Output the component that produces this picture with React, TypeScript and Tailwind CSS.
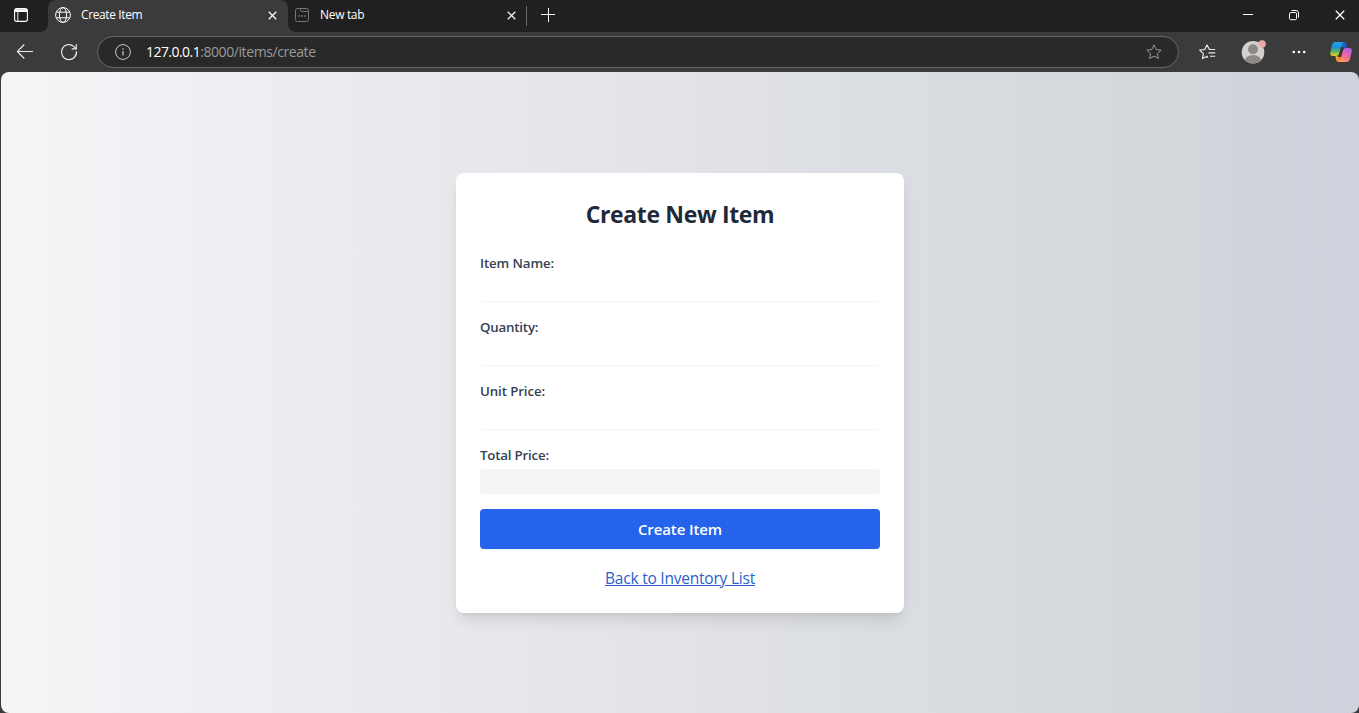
import React from "react";

const FIELDS = [
  { id: "name", label: "Item Name:", tracking: "tracking-[-0.12px]" },
  { id: "quantity", label: "Quantity:", tracking: "tracking-[-0.2px]" },
  { id: "unit", label: "Unit Price:", tracking: "tracking-[-0.12px]" },
];

function CloseIcon({ className = "size-[10px]" }: { className?: string }) {
  return (
    <svg viewBox="0 0 10 10" className={className} fill="none" stroke="#fff" strokeWidth="1.3">
      <path d="M.8.8l8.4 8.4M9.2.8L.8 9.2" />
    </svg>
  );
}

function TabBar() {
  return (
    <div className="flex h-8 bg-[#3b3b3b] text-[12px] text-white">
      <div className="flex w-12 items-center rounded-br-lg bg-[#202020] pb-[2px] pl-[14px]">
        <svg viewBox="0 0 14 14" className="size-[14px]" fill="none" stroke="#fff" strokeWidth="1.1">
          <rect x=".6" y=".6" width="12.8" height="12.8" rx="2.2" />
          <path d="M1 1.2h12v2.8H1z" fill="#fff" stroke="none" />
          <path d="M3.8 4v9.4" strokeWidth=".9" />
        </svg>
      </div>
      <div className="flex w-60 items-center bg-[#202020]">
        <div className="flex h-full w-full items-center rounded-t-lg bg-[#3b3b3b] pr-[11px] pb-[2px] pl-[7px]">
          <svg viewBox="0 0 16 16" className="mr-[10px] size-4" fill="none" stroke="#fff" strokeWidth="1">
            <circle cx="8" cy="8" r="7.4" />
            <ellipse cx="8" cy="8" rx="3.6" ry="7.4" />
            <path d="M1.4 5.2h13.2M1.4 10.8h13.2" />
          </svg>
          <span className="grow tracking-[-0.38px]">Create Item</span>
          <CloseIcon className="mt-px size-[9px]" />
        </div>
      </div>
      <div className="flex grow items-center rounded-bl-lg bg-[#202020] pb-[2px] pl-[7px]">
        <svg viewBox="0 0 14 14" className="mr-[11px] size-[14px]" fill="none" stroke="#777" strokeWidth="1">
          <rect x=".5" y=".5" width="13" height="13" rx="2" />
          <path d="M5.5.8v1.4q0 1.3 1.3 1.3h6.5" />
          <path d="M3.2 8h1.6M6.2 8h1.6M9.2 8h1.6" strokeWidth="1.5" />
        </svg>
        <span className="w-[187px] tracking-[-0.32px]">New tab</span>
        <CloseIcon className="mt-px size-[9px]" />
        <div className="mt-[1px] ml-[10px] h-5 w-px bg-[#6b6b6b]" />
        <svg viewBox="0 0 14 14" className="ml-[14px] size-[14px]" stroke="#fff" strokeWidth="1">
          <path d="M7.5 0v14M0 6.5h14" />
        </svg>
        <div className="grow" />
        <svg viewBox="0 0 10 10" className="mr-9 size-[10px]" stroke="#fff" strokeWidth="1">
          <path d="M0 4.5h10" />
        </svg>
        <svg viewBox="0 0 10 10" className="mr-9 size-[10px] overflow-visible" fill="none" stroke="#fff" strokeWidth="1">
          <rect x=".5" y="2.5" width="7" height="7.2" rx="1.2" />
          <path d="M2.5.5h4.6q2.4 0 2.4 2.4v4.8" />
        </svg>
        <CloseIcon className="mr-[14px] size-[10px]" />
      </div>
    </div>
  );
}

const STAR = "M8 .9l2.15 4.6 5 .65-3.7 3.45.95 5L8 12.2l-4.4 2.4.95-5L.85 6.15l5-.65z";

function CopilotLogo() {
  return (
    <svg viewBox="0 0 22 20" className="h-5 w-[22px] shrink-0">
      <defs>
        <linearGradient id="cp-left" x1="0" y1="0" x2="0" y2="1">
          <stop offset="0" stopColor="#16a5ee" />
          <stop offset=".4" stopColor="#2591d0" />
          <stop offset=".7" stopColor="#65b85b" />
          <stop offset="1" stopColor="#f2cc1f" />
        </linearGradient>
        <linearGradient id="cp-right" x1=".8" y1="0" x2=".2" y2="1">
          <stop offset="0" stopColor="#aa61ed" />
          <stop offset=".5" stopColor="#f264a3" />
          <stop offset="1" stopColor="#ffa04e" />
        </linearGradient>
        <linearGradient id="cp-top">
          <stop offset="0" stopColor="#1d91e7" />
          <stop offset="1" stopColor="#214bcb" />
        </linearGradient>
        <linearGradient id="cp-bottom">
          <stop offset="0" stopColor="#f6ac32" />
          <stop offset="1" stopColor="#f35a38" />
        </linearGradient>
      </defs>
      <path d="M9 0h5q2 0 2.5 2l.9 4h-2q-1.2-1.4-3.4-1H8z" fill="url(#cp-top)" />
      <path d="M13 20H8.4q-1.7 0-2.2-2L5.4 14H7q1.2 1.4 3.4 1H14z" fill="url(#cp-bottom)" />
      <path d="M5.5 0h8.3q-1.5.2-2 2l-2.6 9.6Q8.5 14 6.4 14H2.8Q-.4 14 .3 10.4L2 3Q2.8 0 5.5 0z" fill="url(#cp-left)" />
      <path d="M16.5 20H8.4q1.5-.2 2-2L13 8.4Q13.7 6 15.8 6h3.4q3.2 0 2.5 3.6L20 17q-.8 3-3.5 3z" fill="url(#cp-right)" />
      <path d="M12 5.5h1.8q-1 1-1.3 2.2L11 13.2q-.4 1.3-1.3 1.3H8.2q1-1 1.4-2.3L11 6.8q.3-1.3 1-1.3z" fill="#37353a" />
    </svg>
  );
}

function AddressBar() {
  return (
    <div className="flex h-10 items-center bg-[#3b3b3b] pl-4">
      <svg viewBox="0 0 18 16" className="h-4 w-[18px] shrink-0" fill="none" stroke="#eee" strokeWidth="1.1">
        <path d="M17 7.5H1.3M8.3.5l-7 7 7 7" />
      </svg>
      <svg viewBox="0 0 16 16" className="ml-[27px] size-4 shrink-0 overflow-visible" fill="none" stroke="#eee" strokeWidth="1.15">
        <path d="M15.4 7.2A7.5 7.5 0 1 1 12.8 2.4L15 4.7" />
        <path d="M15.3.3v4.6h-4.6" />
      </svg>
      <div className="ml-5 flex h-8 w-[1082px] shrink-0 items-center rounded-full border border-[#686868] bg-[#292929] pr-4 pl-[17px] text-[14px]">
        <svg viewBox="0 0 16 16" className="mr-[15px] size-4" fill="none" stroke="#ccc" strokeWidth="1">
          <circle cx="8" cy="8" r="7.4" />
          <path d="M8 7v4.5M8 4.3v1.4" strokeWidth="1.2" />
        </svg>
        <span className="grow pb-px text-[#9a9a9a]">
          <span className="tracking-[-0.55px] text-white">127.0.0.1</span>
          <span className="tracking-[-0.41px]">:8000/items/create</span>
        </span>
        <svg viewBox="0 0 16 16" className="size-4" fill="none" stroke="#999" strokeWidth="1" strokeLinejoin="round">
          <path d={STAR} />
        </svg>
      </div>
      <svg viewBox="0 0 17 16" className="ml-5 h-4 w-[17px] shrink-0" fill="none" stroke="#eee" strokeWidth="1.15" strokeLinejoin="round">
        <path d="M15.8 5.5h-5.3L8 .9 5.7 5.5l-5 .65 3.7 3.45-.95 5L8 12.2l.8 1.5" />
        <path d="M10.3 5.5h5.9M9.5 8.8h6.7M11 12.2h5.2" />
      </svg>
      <svg viewBox="0 0 25 24" className="ml-[25px] h-6 w-[25px] shrink-0">
        <defs>
          <clipPath id="avatar"><circle cx="12" cy="12.2" r="11.3" /></clipPath>
        </defs>
        <g clipPath="url(#avatar)">
          <rect width="25" height="24" fill="#d3d0cd" />
          <circle cx="12" cy="9.3" r="5" fill="#8d8986" />
          <ellipse cx="12" cy="20.8" rx="8.2" ry="5.7" fill="#8d8986" />
        </g>
        <circle cx="21" cy="4" r="3.6" fill="#f3a5a2" stroke="#c7c0bd" strokeWidth=".6" />
      </svg>
      <svg viewBox="0 0 14 4" className="ml-[26px] h-1 w-[14px] shrink-0" fill="#fff">
        <circle cx="1.8" cy="2" r="1.3" /><circle cx="7" cy="2" r="1.3" /><circle cx="12.2" cy="2" r="1.3" />
      </svg>
      <div className="w-6 shrink-0" />
      <CopilotLogo />
    </div>
  );
}

export default function App() {
  return (
    <div className="flex h-screen w-full flex-col overflow-hidden bg-[#3b3b3b] font-['Open_Sans','Noto_Sans',sans-serif]">
      <TabBar />
      <AddressBar />
      <main className="ml-px flex grow items-center justify-center rounded-lg bg-[linear-gradient(to_right,#f4f5f6_0%,#edeef2_18%,#e3e4e8_48%,#dadde2_66%,#d7dadd_78%,#d5d8db_87%,#d1d4dd_90%,#cfd2dc_100%)]">
        <div className="w-[448px] rounded-lg bg-white p-6 shadow-lg">
          <h1 className="mb-[23px] pt-px text-center text-[23px] leading-8 font-bold tracking-[-0.35px] text-gray-800">Create New Item</h1>
          {FIELDS.map((f) => (
            <div key={f.id} className="mb-4">
              <label htmlFor={f.id} className={`block text-[13.3px] leading-5 font-semibold text-gray-700 ${f.tracking}`}>{f.label}</label>
              <input id={f.id} className="mt-1 block h-6 w-full rounded bg-white shadow-xs outline-none" />
            </div>
          ))}
          <div className="mb-4">
            <label htmlFor="total" className="block text-[13.3px] leading-5 font-semibold tracking-[-0.2px] text-gray-700">Total Price:</label>
            <input id="total" readOnly className="mt-1 block h-6 w-full rounded bg-[#f3f4f6] shadow-xs outline-none" />
          </div>
          <button className="block h-10 w-full rounded bg-[#2563eb] pt-px text-[15px] font-semibold tracking-[-0.1px] text-white shadow-xs">Create Item</button>
          <div className="mt-[17px] mb-[-1px] text-center leading-6">
            <a href="#" className="text-[15.5px] tracking-[-0.22px] text-[#2b5fcb] underline">Back to Inventory List</a>
          </div>
        </div>
      </main>
    </div>
  );
}
